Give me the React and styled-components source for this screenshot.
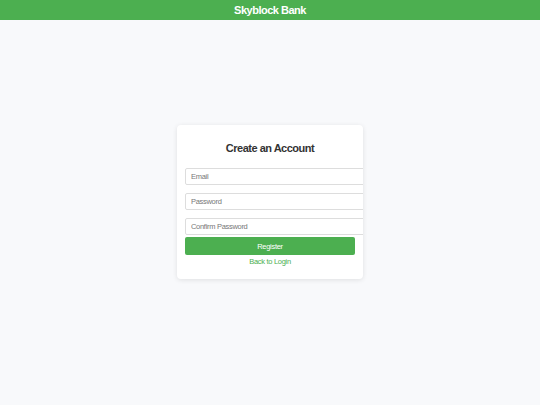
import React from 'react'
import styled, { createGlobalStyle } from 'styled-components'

const GlobalStyle = createGlobalStyle`
    html, body {
        margin: 0;
        padding: 0;
        background: #f8f9fb;
        font-family: "Liberation Sans", Arial, sans-serif;
    }
`

const Header = styled.header`
    height: 20px;
    background: #4caf50;
    color: #ffffff;
    display: flex;
    align-items: center;
    justify-content: center;
    font-size: 11px;
    font-weight: bold;
    letter-spacing: -0.5px;
`

const Main = styled.main`
    height: calc(100vh - 20px);
    padding-bottom: 21px;
    box-sizing: border-box;
    display: flex;
    align-items: center;
    justify-content: center;
`

const Card = styled.div`
    width: 186px;
    box-sizing: border-box;
    padding: 15px 8px 12px;
    background: #ffffff;
    border-radius: 4px;
    box-shadow: 0 1px 5px rgba(0, 0, 0, 0.1);
    overflow: hidden;
    display: flex;
    flex-direction: column;
`

const Title = styled.h2`
    margin: 0 0 12px;
    font-size: 11px;
    line-height: 16px;
    letter-spacing: -0.5px;
    text-align: center;
    color: #333333;
`

const Input = styled.input`
    width: 100%;
    margin: 0 0 ${(p) => (p.$last ? 2 : 8)}px;
    padding: 3px 5px;
    border: 1px solid #dddddd;
    border-radius: 2px;
    font-family: inherit;
    font-size: 7.5px;
    line-height: 9px;
    letter-spacing: -0.3px;
    color: #333333;
    outline: none;
    &::placeholder {
        color: #777777;
    }
`

const Button = styled.button`
    width: 100%;
    height: 18px;
    border: none;
    border-radius: 2px;
    background: #4caf50;
    color: #ffffff;
    font-family: inherit;
    font-size: 7.5px;
    letter-spacing: -0.3px;
    cursor: pointer;
`

const BackLink = styled.a`
    margin-top: 2px;
    text-align: center;
    font-size: 7.5px;
    line-height: 10px;
    letter-spacing: -0.3px;
    color: #4caf50;
    text-decoration: none;
`

function App() {
    return (
        <>
            <GlobalStyle />
            <Header>Skyblock Bank</Header>
            <Main>
                <Card>
                    <Title>Create an Account</Title>
                    <Input type="email" placeholder="Email" />
                    <Input type="password" placeholder="Password" />
                    <Input type="password" placeholder="Confirm Password" $last />
                    <Button>Register</Button>
                    <BackLink href="#">Back to Login</BackLink>
                </Card>
            </Main>
        </>
    )
}

export default App
